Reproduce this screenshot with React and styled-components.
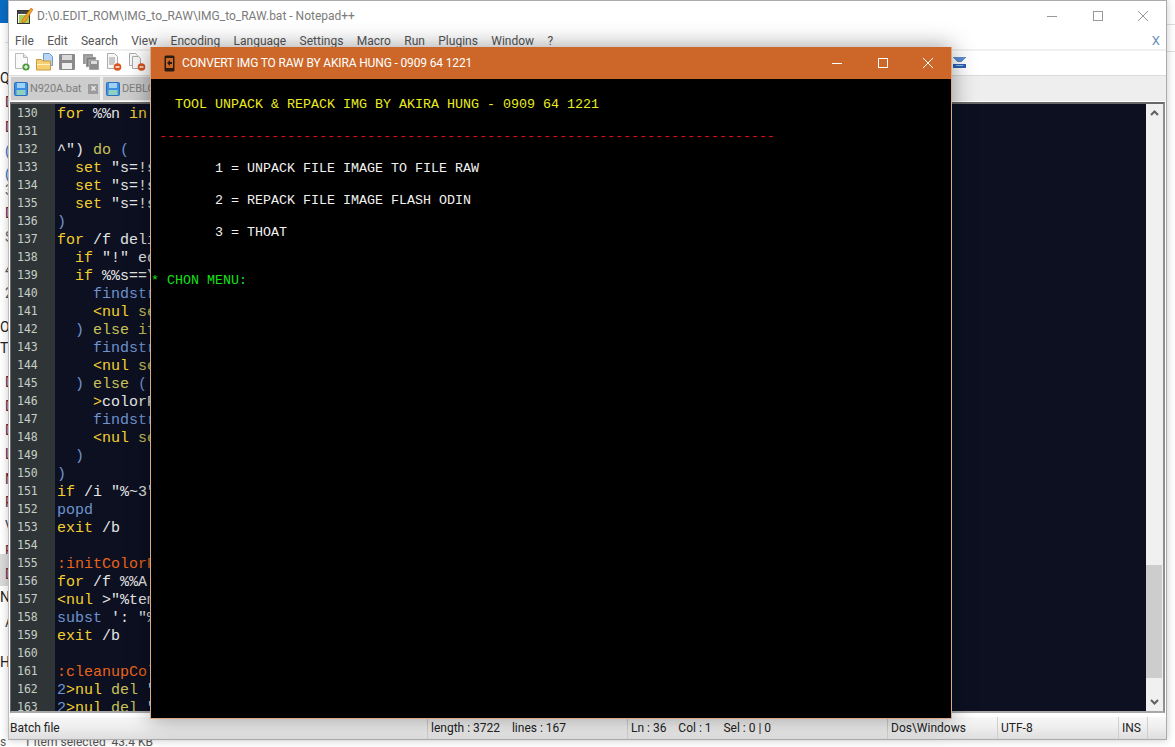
import styled, { createGlobalStyle } from "styled-components";

const Y = "#f5cf2e";
const W = "#e6e6e6";
const B = "#6f93cf";
const O = "#e8641a";
const G = "#c9c25a";

const CODE = [
  [[Y, "for"], [W, " %%n "], [Y, "in"]],
  [],
  [[W, "^\")"], [G, " do"], [B, " ("]],
  [[Y, "  set"], [W, " \"s=!s"]],
  [[Y, "  set"], [W, " \"s=!s"]],
  [[Y, "  set"], [W, " \"s=!s"]],
  [[B, ")"]],
  [[Y, "for"], [W, " /f deli"]],
  [[Y, "  if"], [W, " \"!\" eq"]],
  [[Y, "  if"], [W, " %%s==\\"]],
  [[B, "    findstr"]],
  [[Y, "    <nul"], [G, " se"]],
  [[B, "  )"], [G, " else if"]],
  [[B, "    findstr"]],
  [[Y, "    <nul"], [G, " se"]],
  [[B, "  )"], [G, " else"], [B, " ("]],
  [[Y, "    >"], [W, "colorP"]],
  [[B, "    findstr"]],
  [[Y, "    <nul"], [G, " se"]],
  [[B, "  )"]],
  [[B, ")"]],
  [[Y, "if"], [W, " /i \"%~3\""]],
  [[B, "popd"]],
  [[Y, "exit"], [W, " /b"]],
  [],
  [[O, ":initColorP"]],
  [[Y, "for"], [W, " /f %%A "]],
  [[Y, "<nul"], [W, " >\"%tem"]],
  [[B, "subst"], [W, " ': \"%"]],
  [[Y, "exit"], [W, " /b"]],
  [],
  [[O, ":cleanupCol"]],
  [[B, "2"], [Y, ">nul"], [G, " del"], [W, " \""]],
  [[B, "2"], [Y, ">nul"], [G, " del"], [W, " \""]],
];

const MENU = ["File", "Edit", "Search", "View", "Encoding", "Language", "Settings", "Macro", "Run", "Plugins", "Window", "?"];

// letters of the page behind the editor, only their first pixels show
const STRAY = [
  [78, "Q", "#222", 0], [102, "D", "#6b2030", 5], [127, "D", "#6b2030", 5], [151, "(", "#2a6db5", 5],
  [174, "(", "#2a6db5", 5], [190, "3", "#666", 5], [213, "D", "#6b2030", 5], [237, "S", "#666", 5],
  [270, "4", "#555", 5], [293, "2", "#555", 5], [327, "O", "#222", 0], [348, "Th", "#222", 0],
  [382, "D", "#6b2030", 5], [406, "D", "#6b2030", 5], [430, "D", "#6b2030", 5], [454, "L", "#6b2030", 5],
  [479, "N", "#6b2030", 5], [502, "P", "#6b2030", 5], [526, "V", "#446", 5], [551, "E", "#6b2030", 5],
  [574, "D", "#6b2030", 5], [597, "N", "#222", 0], [622, "A", "#444", 5], [662, "H", "#222", 0],
];

const GlobalStyle = createGlobalStyle`
  html, body { margin: 0; padding: 0; background: #fff; }
  #root { width: 1175px; height: 747px; }
`;

const Desktop = styled.div`
  position: relative;
  width: 1175px;
  height: 747px;
  overflow: hidden;
  background: #fff;
  font-family: Roboto, "Liberation Sans", sans-serif;
`;

const BackPane = styled.div`
  display: flex;
  flex-direction: column;
  width: 8px;
  height: 747px;
  background: #fff;
`;

const BlueBar = styled.div`
  flex: none;
  height: 23px;
  background: #0b6cc2;
`;

const Arrow = styled.div`
  flex: none;
  height: 35px;
  padding-left: 2px;
  color: #ccc;
  font-size: 14px;
  line-height: 34px;
`;

const Stray = styled.div`
  flex: none;
  height: 16px;
  margin-top: ${(p) => p.$gap}px;
  padding-left: ${(p) => p.$left}px;
  padding-top: ${(p) => (p.$picked ? 12 : 0)}px;
  padding-bottom: ${(p) => (p.$picked ? 4 : 0)}px;
  color: ${(p) => p.$color};
  background: ${(p) => (p.$picked ? "#d9d9d9" : "transparent")};
  font-size: 14px;
  line-height: 16px;
  white-space: nowrap;
`;

const Footnote = styled.div`
  position: absolute;
  left: 0;
  bottom: -2px;
  color: #555;
  font-size: 12px;
  line-height: 14px;
  white-space: pre;
`;

const EdgeLine = styled.div`
  position: absolute;
  left: 1167px;
  right: 0;
  top: ${(p) => p.$top}px;
  height: 1px;
  background: #ddd;
`;

const Notepad = styled.div`
  position: absolute;
  left: 8px;
  top: 0;
  width: 1159px;
  height: 740px;
  box-sizing: border-box;
  display: flex;
  flex-direction: column;
  background: #fff;
  border: 1px solid #ababab;
  border-left-color: #bdbdbd;
  box-shadow: 0 0 8px rgba(0, 0, 0, 0.22);
`;

const TitleBar = styled.div`
  flex: none;
  height: 29px;
  display: flex;
  align-items: center;
  padding: 0 0 2px 7px;
`;

const TitleText = styled.div`
  flex: 1;
  margin-left: 3px;
  color: #7b7b7b;
  font-size: 12px;
  white-space: nowrap;
`;

const WinButton = styled.div`
  flex: none;
  width: 45.5px;
  height: 29px;
  display: flex;
  align-items: center;
  justify-content: center;
`;

const MenuBar = styled.div`
  flex: none;
  height: 17px;
  display: flex;
  align-items: center;
  gap: 13.4px;
  padding: 0 6px;
  color: #555;
  font-size: 12px;
`;

const MenuClose = styled.div`
  margin-left: auto;
  color: #6a8fb8;
  font-size: 13px;
`;

const ToolBar = styled.div`
  flex: none;
  height: 24px;
  display: flex;
  align-items: center;
  gap: 6px;
  padding-left: 6px;
  border-top: 2px solid #f0f0f0;
  border-bottom: 1px solid #dcdcdc;
  svg { flex: none; margin-top: -2px; }
`;

const TabBar = styled.div`
  flex: none;
  height: 24px;
  display: flex;
  align-items: flex-end;
  gap: 3px;
  padding: 0 0 1px 2px;
  background: #eeeeee;
  border-bottom: 1px solid #fff;
`;

const Tab = styled.div`
  height: 23px;
  width: ${(p) => p.$w}px;
  box-sizing: border-box;
  display: flex;
  align-items: center;
  gap: 2px;
  padding-left: 3px;
  background: #cdcdcd;
  color: #7d7d7d;
  font-size: 11px;
  letter-spacing: -0.1px;
  white-space: nowrap;
  overflow: hidden;
  svg { flex: none; }
`;

const TabClose = styled.div`
  flex: none;
  width: 10px;
  height: 10px;
  margin-left: 5px;
  display: flex;
  align-items: center;
  justify-content: center;
  background: #9c9c9c;
  color: #eee;
  font-size: 10px;
  font-weight: 700;
  line-height: 10px;
`;

const EditorFrame = styled.div`
  flex: none;
  height: 611px;
  margin: 0 1px;
  box-sizing: border-box;
  display: flex;
  border-style: solid;
  border-width: 2px 2px 2px 1px;
  border-color: #696969 #8f8f8f #a8a8a8 #6a6a6a;
  overflow: hidden;
`;

const Gutter = styled.div`
  flex: none;
  width: 44px;
  background: #2f3537;
`;

const LineNo = styled.div`
  height: 18px;
  padding-left: 6px;
  color: #c6cfc6;
  font-family: "DejaVu Sans Mono", monospace;
  font-size: 11.5px;
  line-height: 18px;
`;

const CodePane = styled.div`
  flex: 1;
  padding-top: 2px;
  background: #0c1021;
`;

const CodeLine = styled.div`
  height: 18px;
  padding-left: 2px;
  font-family: "Liberation Mono", monospace;
  font-size: 15px;
  line-height: 18px;
  white-space: pre;
`;

const Token = styled.span`
  color: ${(p) => p.$color};
`;

const ScrollBar = styled.div`
  flex: none;
  width: 17px;
  display: flex;
  flex-direction: column;
  background: #f0f0f0;
`;

const ScrollArrow = styled.div`
  flex: none;
  height: 18px;
  display: flex;
  align-items: center;
  justify-content: center;
`;

const ScrollTrack = styled.div`
  flex: 1;
  display: flex;
  flex-direction: column;
  justify-content: flex-end;
  padding: 0 1px 15px 0;
`;

const ScrollThumb = styled.div`
  height: 113px;
  background: #cdcdcd;
`;

const StatusBar = styled.div`
  flex: none;
  margin-top: 4px;
  height: 22px;
  display: flex;
  background: linear-gradient(#f7f7f7, #f0f0f0 40%, #dedede);
  color: #222;
  font-size: 12px;
  line-height: 22px;
  white-space: pre;
`;

const StatusCell = styled.div`
  flex: none;
  width: ${(p) => p.$w}px;
  box-sizing: border-box;
  padding-left: ${(p) => p.$pad ?? 3}px;
  border-left: ${(p) => (p.$first ? "none" : "1px solid #cfcfcf")};
`;

const Console = styled.div`
  position: absolute;
  left: 150px;
  top: 47px;
  width: 802px;
  height: 672px;
  box-sizing: border-box;
  display: flex;
  flex-direction: column;
  border: 1px solid #dba985;
  border-top: none;
  background: #000;
  box-shadow: 0 0 22px rgba(0, 0, 0, 0.4);
`;

const ConsoleBar = styled.div`
  flex: none;
  height: 32px;
  display: flex;
  align-items: center;
  padding-left: 13px;
  background: #cc6729;
  color: #fff;
  font-size: 12px;
`;

const ConsoleTitle = styled.div`
  flex: 1;
  margin-left: 7px;
  letter-spacing: -0.15px;
  white-space: nowrap;
`;

const ConsoleButton = styled.div`
  flex: none;
  width: 45.5px;
  height: 32px;
  display: flex;
  align-items: center;
  justify-content: center;
`;

const ConsoleBody = styled.div`
  flex: 1;
  padding-top: 2px;
  font-family: "Liberation Mono", monospace;
  font-size: 13.33px;
  line-height: 16px;
  white-space: pre;
`;

const ConsoleLine = styled.div`
  height: 16px;
  margin-top: ${(p) => p.$skip * 16}px;
  color: ${(p) => p.$color};
`;

const WinGlyph = ({ kind, color, dim = 12 }) => (
  <svg width={dim} height={dim} viewBox="0 0 12 12" fill="none" stroke={color} strokeWidth="1" shapeRendering="crispEdges">
    {kind === "min" && <path d="M1 6.5h10" />}
    {kind === "max" && <rect x="1.5" y="1.5" width="9" height="9" />}
    {kind === "close" && <path d="M1 1l10 10M11 1L1 11" shapeRendering="auto" />}
  </svg>
);

const AppIcon = () => (
  <svg width="18" height="18" viewBox="0 0 18 18">
    <rect x="1.5" y="3.5" width="12" height="13" fill="#fff" stroke="#333" />
    <path d="M2 4h11v3H2z" fill="#444" />
    <path d="M3 8h10v8H3z" fill="#a7cf5a" />
    <path d="M6 13L15 1l2 1.5L9 15l-3 1z" fill="#f0a020" stroke="#a85a10" strokeWidth=".5" />
  </svg>
);

const Floppy = () => (
  <svg width="14" height="14" viewBox="0 0 14 14">
    <rect x=".5" y=".5" width="13" height="13" rx="1" fill="#3d8fe0" stroke="#2a6fc0" />
    <rect x="3" y="1" width="8" height="5" fill="#9fd0f5" />
    <rect x="2.5" y="8" width="9" height="5" fill="#8fd0c0" />
  </svg>
);

const NewIcon = () => (
  <svg width="15" height="18" viewBox="0 0 15 18">
    <path d="M.5 .5h8l4 4v11H.5z" fill="#fafafa" stroke="#bbb" />
    <path d="M8.5 .5v4h4" fill="#e4e4e4" stroke="#bbb" />
    <circle cx="11" cy="14" r="3.6" fill="#4c9a3c" />
    <path d="M11 12v4M9 14h4" stroke="#fff" strokeWidth="1.2" />
  </svg>
);

const OpenIcon = () => (
  <svg width="17" height="18" viewBox="0 0 17 18">
    <path d="M7.5 .5h6l3 3v9h-9z" fill="#b9d4f4" stroke="#6f9ad0" />
    <path d="M.5 6.5h5l1 1.5h8v9h-14z" fill="#f6cf72" stroke="#c79a3a" />
    <path d="M1 11h13v1H1z" fill="#fff0c0" />
  </svg>
);

const SaveIcon = () => (
  <svg width="17" height="16" viewBox="0 0 17 16">
    <rect width="16" height="16" rx="1" fill="#8a8a8a" />
    <rect x="3" y="1" width="10" height="5" fill="#d9d9d9" />
    <rect x="3" y="9" width="10" height="6" fill="#eee" />
  </svg>
);

const SaveAllIcon = () => (
  <svg width="18" height="16" viewBox="-1 0 18 16">
    <rect y="0" width="10" height="10" fill="#9a9a9a" />
    <rect x="3" y="3" width="10" height="10" fill="#7f7f7f" stroke="#ddd" strokeWidth=".5" />
    <rect x="6" y="6" width="10" height="10" fill="#8c8c8c" stroke="#eee" strokeWidth=".5" />
    <rect x="8" y="7" width="6" height="3" fill="#ddd" />
  </svg>
);

const CloseIcon = () => (
  <svg width="16" height="18" viewBox="0 0 16 18">
    <path d="M1.5 .5h7l3 3v12h-10z" fill="#f8f8f8" stroke="#aaa" />
    <path d="M3 5h6M3 7h6M3 9h6M3 11h5" stroke="#999" />
    <circle cx="11.5" cy="14" r="3.8" fill="#d9541e" />
    <path d="M9.5 14h4" stroke="#fff" strokeWidth="1.4" />
  </svg>
);

const CloseAllIcon = () => (
  <svg width="18" height="18" viewBox="0 0 18 18">
    <path d="M1.5 .5h6l2 2v10h-8z" fill="#f8f8f8" stroke="#aaa" />
    <path d="M4.5 3.5h6l2 2v10h-8z" fill="#f8f8f8" stroke="#aaa" />
    <circle cx="13.5" cy="14" r="3.8" fill="#d9541e" />
    <path d="M11.5 14h4" stroke="#fff" strokeWidth="1.4" />
  </svg>
);

const FunnelIcon = styled.svg`
  position: absolute;
  left: 953px;
  top: 57px;
`;

const PhoneIcon = () => (
  <svg width="11" height="17" viewBox="0 0 11 17">
    <rect x=".5" y=".5" width="10" height="16" rx="1.5" fill="#2b1a10" />
    <rect x="2" y="3" width="7" height="10" fill="#cc6729" />
    <path d="M3 8l3-3v2h2v2H6v2z" fill="#2b1a10" />
  </svg>
);

const Chevron = ({ up }) => (
  <svg width="9" height="6" viewBox="0 0 9 6" fill="none" stroke="#606060" strokeWidth="2">
    <path d={up ? "M1 5l3.5-3.5L8 5" : "M1 1l3.5 3.5L8 1"} />
  </svg>
);

const strayRows = STRAY.map(([y, text, color, left], i) => {
  const picked = y === 574;
  const top = picked ? 554 : y - 8;
  let prevBottom = 58;
  if (i > 0) prevBottom = STRAY[i - 1][0] === 574 ? 586 : STRAY[i - 1][0] + 8;
  return { gap: top - prevBottom, text, color, left, picked };
});

export default function App() {
  return (
    <Desktop>
      <GlobalStyle />
      <BackPane>
        <BlueBar />
        <Arrow>→</Arrow>
        {strayRows.map((r, i) => (
          <Stray key={i} $gap={r.gap} $left={r.left} $color={r.color} $picked={r.picked}>
            {r.text}
          </Stray>
        ))}
      </BackPane>
      <Footnote>{"s      1 item selected  43.4 KB"}</Footnote>
      <EdgeLine $top={24} />
      <EdgeLine $top={51} />

      <Notepad>
        <TitleBar>
          <AppIcon />
          <TitleText>D:\0.EDIT_ROM\IMG_to_RAW\IMG_to_RAW.bat - Notepad++</TitleText>
          <WinButton><WinGlyph kind="min" color="#999" /></WinButton>
          <WinButton><WinGlyph kind="max" color="#999" /></WinButton>
          <WinButton><WinGlyph kind="close" color="#999" /></WinButton>
        </TitleBar>
        <MenuBar>
          {MENU.map((m) => <span key={m}>{m}</span>)}
          <MenuClose>X</MenuClose>
        </MenuBar>
        <ToolBar>
          <NewIcon />
          <OpenIcon />
          <SaveIcon />
          <SaveAllIcon />
          <CloseIcon />
          <CloseAllIcon />
        </ToolBar>
        <TabBar>
          <Tab $w={89}>
            <Floppy />
            N920A.bat
            <TabClose>×</TabClose>
          </Tab>
          <Tab $w={60}>
            <Floppy />
            DEBLOAT
          </Tab>
        </TabBar>
        <EditorFrame>
          <Gutter>
            {CODE.map((_, i) => <LineNo key={i}>{130 + i}</LineNo>)}
          </Gutter>
          <CodePane>
            {CODE.map((line, i) => (
              <CodeLine key={i}>
                {line.map(([color, text], j) => <Token key={j} $color={color}>{text}</Token>)}
              </CodeLine>
            ))}
          </CodePane>
          <ScrollBar>
            <ScrollArrow><Chevron up /></ScrollArrow>
            <ScrollTrack><ScrollThumb /></ScrollTrack>
            <ScrollArrow><Chevron /></ScrollArrow>
          </ScrollBar>
        </EditorFrame>
        <StatusBar>
          <StatusCell $first $pad={1} $w={418}>Batch file</StatusCell>
          <StatusCell $w={200}>length : 3722    lines : 167</StatusCell>
          <StatusCell $w={260}>Ln : 36    Col : 1    Sel : 0 | 0</StatusCell>
          <StatusCell $w={110}>Dos\Windows</StatusCell>
          <StatusCell $w={121}>UTF-8</StatusCell>
          <StatusCell $w={29}>INS</StatusCell>
          <StatusCell $w={19} />
        </StatusBar>
      </Notepad>

      <FunnelIcon width="13" height="11" viewBox="0 0 13 11" shapeRendering="crispEdges">
        <path d="M0 0h13v1l-4 3v1H4V4L0 1z" fill="#5f8ed0" />
        <path d="M0 7h13v4H0z" fill="#2f62b5" />
        <path d="M3 8h7v1H3z" fill="#8fb4e6" />
      </FunnelIcon>

      <Console>
        <ConsoleBar>
          <PhoneIcon />
          <ConsoleTitle>CONVERT IMG TO RAW BY AKIRA HUNG - 0909 64 1221</ConsoleTitle>
          <ConsoleButton><WinGlyph kind="min" color="#fff" /></ConsoleButton>
          <ConsoleButton><WinGlyph kind="max" color="#fff" /></ConsoleButton>
          <ConsoleButton><WinGlyph kind="close" color="#fff" /></ConsoleButton>
        </ConsoleBar>
        <ConsoleBody>
          <ConsoleLine $skip={1} $color="#e8ec20">{"   TOOL UNPACK & REPACK IMG BY AKIRA HUNG - 0909 64 1221"}</ConsoleLine>
          <ConsoleLine $skip={1} $color="#e01010">{" " + "-".repeat(77)}</ConsoleLine>
          <ConsoleLine $skip={1} $color="#f2f2f2">{"        1 = UNPACK FILE IMAGE TO FILE RAW"}</ConsoleLine>
          <ConsoleLine $skip={1} $color="#f2f2f2">{"        2 = REPACK FILE IMAGE FLASH ODIN"}</ConsoleLine>
          <ConsoleLine $skip={1} $color="#f2f2f2">{"        3 = THOAT"}</ConsoleLine>
          <ConsoleLine $skip={2} $color="#16e016">{"* CHON MENU:"}</ConsoleLine>
        </ConsoleBody>
      </Console>
    </Desktop>
  );
}
